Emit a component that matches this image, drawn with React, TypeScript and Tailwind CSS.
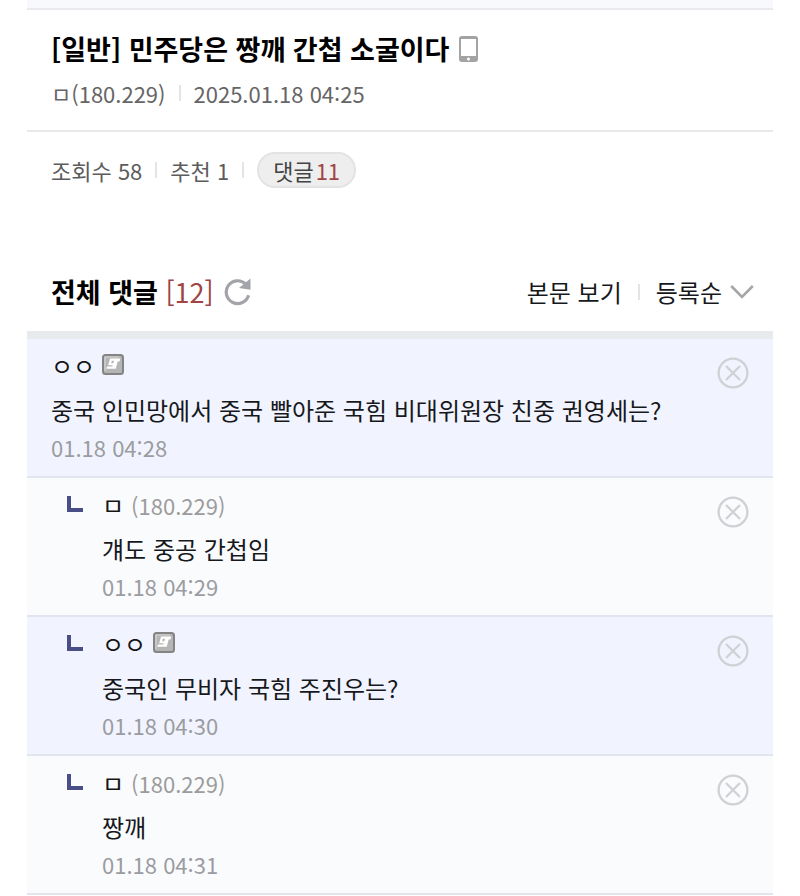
import type { ReactNode } from 'react';

type Comment = {
  id: number;
  author: string;
  ip?: string;
  text: string;
  time: string;
  reply: boolean;
};

const comments: Comment[] = [
  { id: 1, author: 'ㅇㅇ', text: '중국 인민망에서 중국 빨아준 국힘 비대위원장 친중 권영세는?', time: '01.18 04:28', reply: false },
  { id: 2, author: 'ㅁ', ip: '(180.229)', text: '걔도 중공 간첩임', time: '01.18 04:29', reply: true },
  { id: 3, author: 'ㅇㅇ', text: '중국인 무비자 국힘 주진우는?', time: '01.18 04:30', reply: true },
  { id: 4, author: 'ㅁ', ip: '(180.229)', text: '짱깨', time: '01.18 04:31', reply: true },
];

function PhoneIcon() {
  return (
    <svg width="19" height="26" viewBox="0 0 19 26" aria-hidden="true">
      <rect width="19" height="26" rx="3" fill="#a3a3a3" />
      <rect x="2" y="3" width="15" height="17" fill="#fff" />
      <circle cx="9.500" cy="23" r="1.500" fill="#fff" />
    </svg>
  );
}

function RefreshIcon() {
  return (
    <svg width="28" height="28" viewBox="0 0 28 28" aria-hidden="true">
      <path d="M21.500 5.900A11.400 11.400 0 1 0 24.600 17.300" fill="none" stroke="#a2a4a9" strokeWidth="3.200" />
      <path d="M26.500 0.500V11.800L15 10Z" fill="#a2a4a9" />
    </svg>
  );
}

function ChevronIcon() {
  return (
    <svg width="24" height="16" viewBox="0 0 24 16" aria-hidden="true">
      <path d="M1.200 2L12 13L22.800 2" fill="none" stroke="#a6a6a6" strokeWidth="2.600" />
    </svg>
  );
}

function MemberIcon() {
  return (
    <svg className="mb-1" width="22" height="21" viewBox="0 0 22 21" aria-hidden="true">
      <rect x="1" y="1" width="20" height="19" rx="2.500" fill="#b5b5b5" stroke="#848484" strokeWidth="2" />
      <path d="M3 17V3H17" fill="none" stroke="#d4d4d4" strokeWidth="1.200" />
      <path
        fillRule="evenodd"
        d="M8 4.500H18.200L17.500 7.500H15.600L13.800 14.800H4.400L5 12.400H10.400L10.700 11.200H6.200ZM9.800 6.800L9.200 9.200H11.400L12 6.800Z"
        fill="#fff"
      />
    </svg>
  );
}

function ReplyIcon() {
  return (
    <svg width="16" height="16" viewBox="0 0 16 16" aria-hidden="true">
      <path d="M2 0V14H16" fill="none" stroke="#494f86" strokeWidth="4" />
    </svg>
  );
}

function CloseIcon() {
  return (
    <svg width="32" height="32" viewBox="0 0 32 32" fill="none" stroke="#d0d1d5" strokeWidth="2.300" aria-hidden="true">
      <circle cx="16" cy="16" r="14.400" />
      <path d="M9 9L23 23M23 9L9 23" />
    </svg>
  );
}

function Divider() {
  return <span className="h-4 w-0.5 bg-[#e4e4e4]" />;
}

function CommentRow({ comment, children }: { comment: Comment; children?: ReactNode }) {
  const tone = comment.author === 'ㅇㅇ' ? 'bg-[#f1f4fe]' : 'bg-[#fafbfd]';
  return (
    <li className={`flex items-start border-b-2 border-[#e2e4ee] pt-[9px] pr-6 pb-3 pl-6 ${tone}`}>
      {comment.reply && (
        <span className="mt-[9px] ml-4 w-[35px] shrink-0">
          <ReplyIcon />
        </span>
      )}
      <div className="min-w-0 flex-1">
        <div className="flex h-9 items-center gap-[7px]">
          <span className="text-[24px] leading-9 text-[#151515]">{comment.author}</span>
          {comment.ip ? <span className="text-[22px] leading-9 text-[#9c9c9c]">{comment.ip}</span> : children}
        </div>
        <p className="mt-[5px] text-[24px] leading-[42px] text-[#17181c]">{comment.text}</p>
        <time className="block text-[22px] leading-[33px] text-[#9b9ca1]">{comment.time}</time>
      </div>
      <button type="button" aria-label="댓글 삭제" className="mt-[9px] shrink-0">
        <CloseIcon />
      </button>
    </li>
  );
}

export default function App() {
  return (
    <main
      lang="ko"
      className="min-h-screen bg-white px-[27px] font-['Noto_Sans_CJK_KR',sans-serif] text-[#17181c]"
    >
      <div className="h-[10px] border-b-2 border-[#e9eaed] bg-[#f8f9fc]" />
      <header className="border-b-2 border-[#e8e8e8] px-6 pt-4 pb-4">
        <h1 className="flex items-center gap-2.5 text-[27px] leading-[46px] font-bold text-black">
          [일반] 민주당은 짱깨 간첩 소굴이다
          <PhoneIcon />
        </h1>
        <div className="flex items-center gap-[13px] text-[22px] leading-[42px] text-[#666]">
          <span>ㅁ(180.229)</span>
          <Divider />
          <span>2025.01.18 04:25</span>
        </div>
      </header>

      <div className="flex items-center gap-[13px] px-6 pt-[18px] text-[22px] leading-10 text-[#5c5c5c]">
        <span>조회수 58</span>
        <Divider />
        <span>추천 1</span>
        <Divider />
        <button
          type="button"
          className="flex h-9 items-center gap-0.5 rounded-full border-2 border-[#e3e3e3] bg-[#eeeeee] px-3.5 text-[#444]"
        >
          댓글<span className="text-[#a04444]">11</span>
        </button>
      </div>

      <section>
        <div className="mt-[79px] flex items-center justify-between border-b-8 border-[#e8ebed] pr-[19px] pb-4 pl-6">
          <h2 className="flex items-center gap-2.5 text-[27px] leading-[46px] font-bold text-black">
            <span>
              전체 댓글 <span className="font-normal text-[#a04444]">[12]</span>
            </span>
            <button type="button" aria-label="새로고침">
              <RefreshIcon />
            </button>
          </h2>
          <div className="flex items-center gap-4 text-[24px] leading-[46px]">
            <a href="#post">본문 보기</a>
            <Divider />
            <button type="button" className="flex items-center gap-2">
              등록순
              <ChevronIcon />
            </button>
          </div>
        </div>
        <ul>
          {comments.map((comment) => (
            <CommentRow key={comment.id} comment={comment}>
              <MemberIcon />
            </CommentRow>
          ))}
        </ul>
      </section>
    </main>
  );
}
